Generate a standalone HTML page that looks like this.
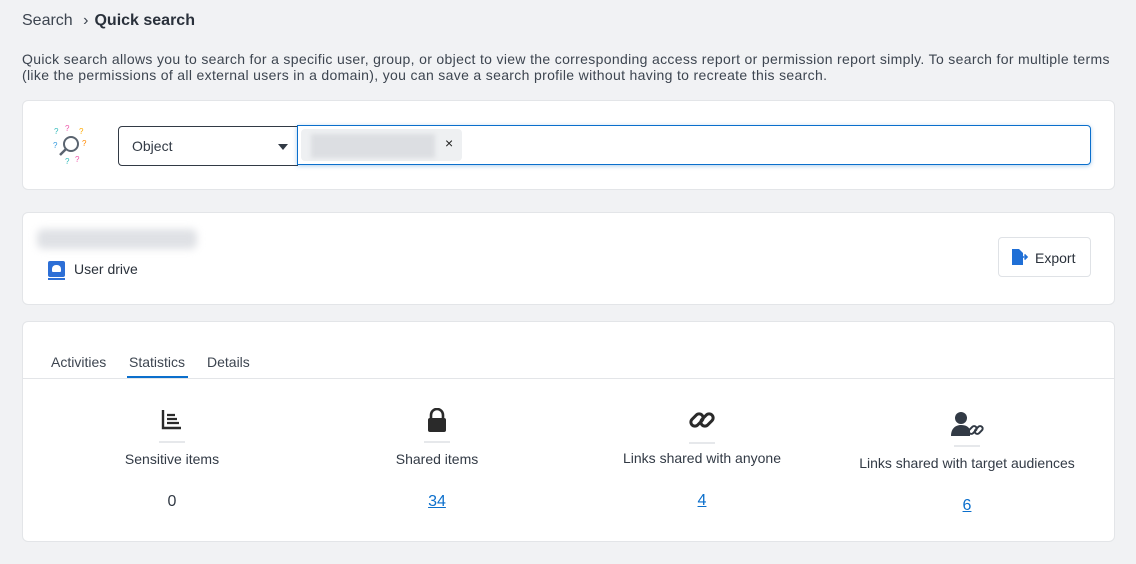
<!DOCTYPE html>
<html><head><style>
*{box-sizing:border-box;margin:0;padding:0}
body{width:1136px;height:564px;background:#f1f2f4;font-family:"Liberation Sans",sans-serif;color:#323a45;position:relative;overflow:hidden}
.a{position:absolute}
.card{position:absolute;left:22px;width:1093px;background:#fff;border:1px solid #e3e5e8;border-radius:6px}
.col{position:absolute;width:260px;text-align:center;font-size:14px}
.col .ln{width:26px;height:2px;background:#e6e8eb;margin:0 auto}
.num{font-size:16px}
.lk{color:#0b6fcc;text-decoration:underline}
</style></head><body>
<div class="a" style="left:22px;top:12px;font-size:16px;color:#3d4550">Search <span style="margin:0 6px;">&#8250;</span><b style="color:#2a313b">Quick search</b></div>
<div class="a" style="left:22px;top:51px;white-space:nowrap;font-size:14px;letter-spacing:0.33px;line-height:16px;color:#3d4550">Quick search allows you to search for a specific user, group, or object to view the corresponding access report or permission report simply. To search for multiple terms<br>(like the permissions of all external users in a domain), you can save a search profile without having to recreate this search.</div>

<div class="card" style="top:100px;height:90px">
  <svg class="a" style="left:28px;top:23px" width="40" height="42" viewBox="0 0 40 42">
    <circle cx="20" cy="20" r="7" fill="none" stroke="#5a6470" stroke-width="2"/>
    <line x1="15" y1="25" x2="9" y2="31" stroke="#5a6470" stroke-width="2.5"/>
    <text x="3" y="10" font-size="8" fill="#3bb">?</text><text x="14" y="7" font-size="8" fill="#e5a">?</text><text x="28" y="10" font-size="8" fill="#fa0">?</text>
    <text x="31" y="22" font-size="8" fill="#f80">?</text><text x="2" y="24" font-size="8" fill="#39d">?</text><text x="24" y="38" font-size="8" fill="#e5a">?</text><text x="14" y="40" font-size="8" fill="#3bb">?</text>
  </svg>
  <div class="a" style="left:95px;top:25px;width:180px;height:40px;border:1px solid #323a45;border-radius:4px 0 0 4px;font-size:14px;padding:11px 13px">Object
    <div class="a" style="right:9px;top:17px;border-left:5px solid transparent;border-right:5px solid transparent;border-top:6px solid #323a45"></div></div>
  <div class="a" style="left:274px;top:24px;width:794px;height:40px;border:1px solid #0b6fcc;border-radius:0 4px 4px 0;box-shadow:0 1px 4px rgba(11,111,204,.35)">
    <div class="a" style="left:3px;top:3px;width:161px;height:32px;background:#eef0f2;border-radius:4px">
      <div class="a" style="left:10px;top:5px;width:124px;height:24px;background:#dcdee2;filter:blur(2px)"></div>
      <div class="a" style="left:144px;top:6px;font-size:14px;color:#222">×</div></div>
  </div>
</div>

<div class="card" style="top:212px;height:93px">
  <div class="a" style="left:14px;top:16px;width:160px;height:20px;background:#dfe1e5;filter:blur(4px);border-radius:6px"></div>
  <div class="a" style="left:25px;top:48px;width:17px;height:16px;background:#2d6fd6;border-radius:2px"><div class="a" style="left:4px;top:4px;width:9px;height:7px;background:#fff;border-radius:4px 4px 1px 1px"></div></div>
  <div class="a" style="left:25px;top:65px;width:17px;height:2px;background:#2d6fd6"></div>
  <div class="a" style="left:51px;top:48px;font-size:14px;color:#2a313b">User drive</div>
  <div class="a" style="left:975px;top:24px;width:93px;height:40px;border:1px solid #dfe2e6;border-radius:4px">
    <svg class="a" style="left:12px;top:11px" width="18" height="16" viewBox="0 0 18 16"><path d="M1 0h7l4 4v12H1z" fill="#1f6fd6"/><path d="M10 8h6M13.5 5.5 16 8l-2.5 2.5" stroke="#1f6fd6" stroke-width="1.6" fill="none"/></svg>
    <div class="a" style="left:36px;top:12px;font-size:14px;color:#2a313b">Export</div></div>
</div>

<div class="card" style="top:321px;height:221px">
  <div class="a" style="left:28px;top:32px;font-size:14px;color:#3d4550">Activities</div>
  <div class="a" style="left:106px;top:32px;font-size:14px;color:#3d4550">Statistics</div>
  <div class="a" style="left:104px;top:54px;width:61px;height:2px;background:#0b6fcc"></div>
  <div class="a" style="left:184px;top:32px;font-size:14px;color:#3d4550">Details</div>
  <div class="a" style="left:0;top:56px;width:1091px;height:1px;background:#e3e5e8"></div>

  <div class="col" style="left:19px;top:88px">
    <svg width="22" height="20" viewBox="0 0 22 20"><path d="M2 0v18h18" stroke="#2a2a2a" stroke-width="2.4" fill="none"/><path d="M6 5h8M6 9h10M6 13h12" stroke="#2a2a2a" stroke-width="2.2"/></svg>
    <div class="ln" style="margin-top:8px"></div><div style="margin-top:8px">Sensitive items</div><div class="num" style="margin-top:26px">0</div></div>
  <div class="col" style="left:284px;top:86px">
    <svg width="22" height="24" viewBox="0 0 22 24"><path d="M5 11V7a6 6 0 0 1 12 0v4" stroke="#2a2a2a" stroke-width="2.6" fill="none"/><rect x="2" y="10" width="18" height="14" rx="2" fill="#2a2a2a"/></svg>
    <div class="ln" style="margin-top:6px"></div><div style="margin-top:8px">Shared items</div><div class="num" style="margin-top:26px"><span class="lk">34</span></div></div>
  <div class="col" style="left:549px;top:86px">
    <svg width="30" height="24" viewBox="0 0 30 24"><g fill="none" stroke="#2a2a2a" stroke-width="3"><rect x="3" y="8" width="14" height="8" rx="4" transform="rotate(-45 10 12)"/><rect x="13" y="8" width="14" height="8" rx="4" transform="rotate(-45 20 12)"/></g></svg>
    <div class="ln" style="margin-top:7px"></div><div style="margin-top:6px">Links shared with anyone</div><div class="num" style="margin-top:26px"><span class="lk">4</span></div></div>
  <div class="col" style="left:814px;top:88px">
    <svg width="36" height="30" viewBox="0 0 36 30"><circle cx="12" cy="8" r="6" fill="#323a45"/><path d="M2 26c0-8 5-11 10-11s8 2 9 5v6z" fill="#323a45"/><g fill="none" stroke="#323a45" stroke-width="2"><rect x="19" y="18" width="9" height="5" rx="2.5" transform="rotate(-45 23 20)"/><rect x="25" y="18" width="9" height="5" rx="2.5" transform="rotate(-45 29 20)"/></g></svg>
    <div class="ln" style="margin-top:2px"></div><div style="margin-top:8px">Links shared with target audiences</div><div class="num" style="margin-top:26px"><span class="lk">6</span></div></div>
</div>
</body></html>
